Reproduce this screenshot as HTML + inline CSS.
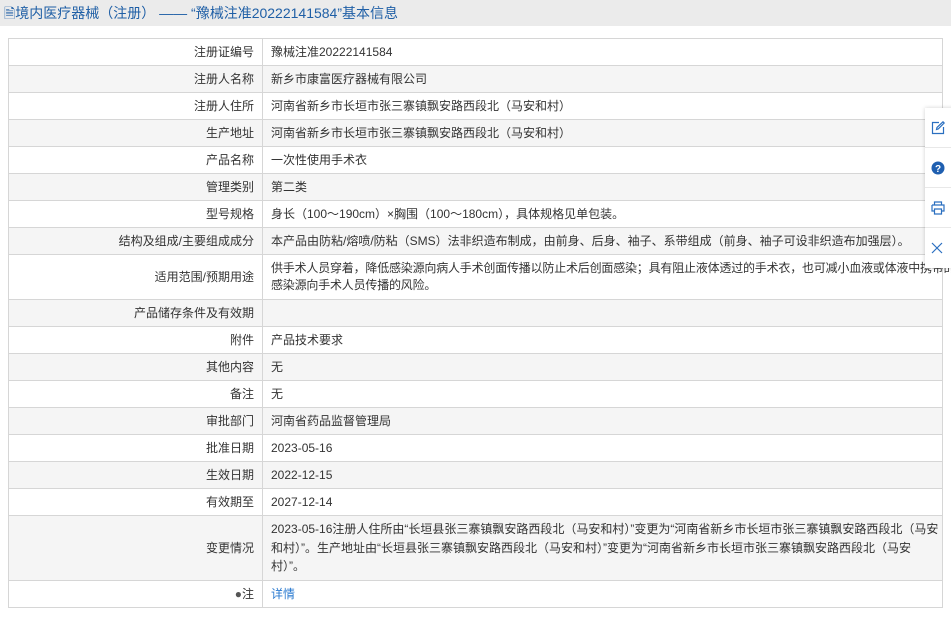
<!DOCTYPE html>
<html><head><meta charset="utf-8"><style>
*{margin:0;padding:0;box-sizing:border-box}
body{width:951px;height:617px;background:#fff;font-family:"Liberation Sans","Noto Sans CJK SC",sans-serif;font-size:12px;color:#333;position:relative;overflow:hidden}
.hd{height:26px;background:#ebebeb;color:#1f5fa6;font-size:14px;line-height:26px;padding-left:4px}
table{position:absolute;left:8px;top:38px;width:935px;border-collapse:collapse;table-layout:fixed}
td{border:1px solid #d6d6d6;line-height:18px;padding:4px 8px;vertical-align:middle;white-space:nowrap;overflow:visible}
td.l{width:254px;text-align:right;padding-right:8px}
tr:nth-child(even) td{background:#f5f5f5}
a{color:#2a7ad0;text-decoration:none}
.fp{position:absolute;left:925px;top:108px;width:30px;height:160px;background:#fff;box-shadow:0 0 4px rgba(0,0,0,.18)}
.fp div{height:40px;border-bottom:1px solid #e8e8e8;display:flex;align-items:center;padding-left:6px}
</style></head><body>
<div class="hd">🗎境内医疗器械（注册） —— “豫械注准20222141584”基本信息</div>
<table>
<tr style="height:26px"><td class="l">注册证编号</td><td>豫械注准20222141584</td></tr>
<tr style="height:27px"><td class="l">注册人名称</td><td>新乡市康富医疗器械有限公司</td></tr>
<tr style="height:27px"><td class="l">注册人住所</td><td>河南省新乡市长垣市张三寨镇飘安路西段北（马安和村）</td></tr>
<tr style="height:27px"><td class="l">生产地址</td><td>河南省新乡市长垣市张三寨镇飘安路西段北（马安和村）</td></tr>
<tr style="height:27px"><td class="l">产品名称</td><td>一次性使用手术衣</td></tr>
<tr style="height:27px"><td class="l">管理类别</td><td>第二类</td></tr>
<tr style="height:27px"><td class="l">型号规格</td><td>身长（100～190cm）×胸围（100～180cm），具体规格见单包装。</td></tr>
<tr style="height:27px"><td class="l">结构及组成/主要组成成分</td><td>本产品由防粘/熔喷/防粘（SMS）法非织造布制成，由前身、后身、袖子、系带组成（前身、袖子可设非织造布加强层）。</td></tr>
<tr style="height:45px"><td class="l">适用范围/预期用途</td><td style="line-height:17px;letter-spacing:-0.2px">供手术人员穿着，降低感染源向病人手术创面传播以防止术后创面感染；具有阻止液体透过的手术衣，也可减小血液或体液中携带的<br>感染源向手术人员传播的风险。</td></tr>
<tr style="height:27px"><td class="l">产品储存条件及有效期</td><td></td></tr>
<tr style="height:27px"><td class="l">附件</td><td>产品技术要求</td></tr>
<tr style="height:27px"><td class="l">其他内容</td><td>无</td></tr>
<tr style="height:27px"><td class="l">备注</td><td>无</td></tr>
<tr style="height:27px"><td class="l">审批部门</td><td>河南省药品监督管理局</td></tr>
<tr style="height:27px"><td class="l">批准日期</td><td>2023-05-16</td></tr>
<tr style="height:27px"><td class="l">生效日期</td><td>2022-12-15</td></tr>
<tr style="height:27px"><td class="l">有效期至</td><td>2027-12-14</td></tr>
<tr style="height:64px"><td class="l">变更情况</td><td style="line-height:18.5px">2023-05-16注册人住所由“长垣县张三寨镇飘安路西段北（马安和村）”变更为“河南省新乡市长垣市张三寨镇飘安路西段北（马安<br>和村）”。生产地址由“长垣县张三寨镇飘安路西段北（马安和村）”变更为“河南省新乡市长垣市张三寨镇飘安路西段北（马安<br>村）”。</td></tr>
<tr style="height:27px"><td class="l"><span style="color:#555">●</span>注</td><td><a>详情</a></td></tr>
</table>
<div class="fp">
<div><svg width="14" height="14" viewBox="0 0 14 14" fill="none" stroke="#2a6fc0" stroke-width="1.2"><path d="M8 1.5H1.5v11h11V6"/><path d="M5.5 8.5l.5-2L12 .8l1.2 1.2-6 6z"/></svg></div>
<div><svg width="14" height="14" viewBox="0 0 14 14"><circle cx="7" cy="7" r="6.5" fill="#1f5fb0"/><text x="7" y="11" font-size="10" fill="#fff" text-anchor="middle" font-family="Liberation Sans" font-weight="bold">?</text></svg></div>
<div><svg width="14" height="14" viewBox="0 0 14 14" fill="none" stroke="#2a6fc0" stroke-width="1.2"><path d="M3.5 4V1h7v3M1 4h12v6h-2.5M3.5 10H1V4M3.5 8h7v5h-7z"/></svg></div>
<div style="border:none"><svg width="12" height="12" viewBox="0 0 12 12" stroke="#2a6fc0" stroke-width="1.2"><path d="M1 1l10 10M11 1L1 11"/></svg></div>
</div>
</body></html>
